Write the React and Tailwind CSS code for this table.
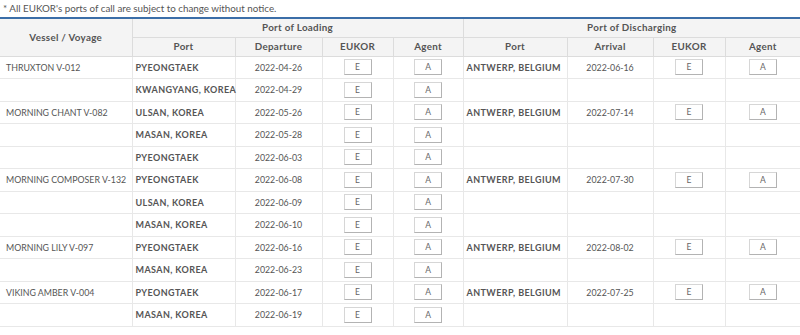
import React from 'react';

const rows = [
  { vessel: 'THRUXTON V-012', port: 'PYEONGTAEK', dep: '2022-04-26', dport: 'ANTWERP, BELGIUM', arr: '2022-06-16' },
  { vessel: '', port: 'KWANGYANG, KOREA', dep: '2022-04-29' },
  { vessel: 'MORNING CHANT V-082', port: 'ULSAN, KOREA', dep: '2022-05-26', dport: 'ANTWERP, BELGIUM', arr: '2022-07-14' },
  { vessel: '', port: 'MASAN, KOREA', dep: '2022-05-28' },
  { vessel: '', port: 'PYEONGTAEK', dep: '2022-06-03' },
  { vessel: 'MORNING COMPOSER V-132', port: 'PYEONGTAEK', dep: '2022-06-08', dport: 'ANTWERP, BELGIUM', arr: '2022-07-30' },
  { vessel: '', port: 'ULSAN, KOREA', dep: '2022-06-09' },
  { vessel: '', port: 'MASAN, KOREA', dep: '2022-06-10' },
  { vessel: 'MORNING LILY V-097', port: 'PYEONGTAEK', dep: '2022-06-16', dport: 'ANTWERP, BELGIUM', arr: '2022-08-02' },
  { vessel: '', port: 'MASAN, KOREA', dep: '2022-06-23' },
  { vessel: 'VIKING AMBER V-004', port: 'PYEONGTAEK', dep: '2022-06-17', dport: 'ANTWERP, BELGIUM', arr: '2022-07-25' },
  { vessel: '', port: 'MASAN, KOREA', dep: '2022-06-19' },
];

const Btn = ({ label }) => (
  <span className="inline-flex items-center justify-center w-[28px] h-[16px] align-middle bg-white border border-[#d6d6d6] border-r-[#b3b3b3] border-b-[#b3b3b3] text-[8.5px] text-[#666] leading-none">
    {label}
  </span>
);

const th = 'border border-[#dcdcdc] bg-[#f4f4f4] text-[#555] font-bold text-[9.8px] h-[19px] p-0 text-center tracking-[0.3px]';
const td = 'border border-[#e8e8e8] h-[22.5px] p-0 text-[8.8px] text-[#555]';

export default function App() {
  return (
    <div className="w-[800px] h-[335px] bg-white overflow-hidden" style={{ fontFamily: 'Lato, "Open Sans", sans-serif' }}>
      <p className="text-[9.8px] text-[#555] leading-[17px] pl-[3px]">* All EUKOR's ports of call are subject to change without notice.</p>
      <table className="w-[800px] table-fixed border-collapse border-t-2 border-t-[#3b6ea8]">
        <colgroup>
          <col className="w-[132px]" />
          <col className="w-[103px]" />
          <col className="w-[87px]" />
          <col className="w-[71px]" />
          <col className="w-[70px]" />
          <col className="w-[104px]" />
          <col className="w-[86px]" />
          <col className="w-[72px]" />
          <col className="w-[75px]" />
        </colgroup>
        <thead>
          <tr>
            <th rowSpan={2} className={`${th} border-l-0`}>Vessel / Voyage</th>
            <th colSpan={4} className={th}>Port of Loading</th>
            <th colSpan={4} className={`${th} border-r-0`}>Port of Discharging</th>
          </tr>
          <tr>
            <th className={th}>Port</th>
            <th className={th}>Departure</th>
            <th className={th}>EUKOR</th>
            <th className={th}>Agent</th>
            <th className={th}>Port</th>
            <th className={th}>Arrival</th>
            <th className={th}>EUKOR</th>
            <th className={`${th} border-r-0`}>Agent</th>
          </tr>
        </thead>
        <tbody>
          {rows.map((r, i) => (
            <tr key={i}>
              <td className={`${td} border-l-0 pl-[6px] whitespace-nowrap`}>{r.vessel}</td>
              <td className={`${td} pl-[3px] font-bold text-[9px] whitespace-nowrap tracking-[0.4px]`}>{r.port}</td>
              <td className={`${td} text-center`}>{r.dep}</td>
              <td className={`${td} text-center`}><Btn label="E" /></td>
              <td className={`${td} text-center`}><Btn label="A" /></td>
              <td className={`${td} pl-[3px] font-bold text-[9px] whitespace-nowrap tracking-[0.4px]`}>{r.dport}</td>
              <td className={`${td} text-center`}>{r.arr}</td>
              <td className={`${td} text-center`}>{r.dport && <Btn label="E" />}</td>
              <td className={`${td} text-center border-r-0`}>{r.dport && <Btn label="A" />}</td>
            </tr>
          ))}
        </tbody>
      </table>
    </div>
  );
}
